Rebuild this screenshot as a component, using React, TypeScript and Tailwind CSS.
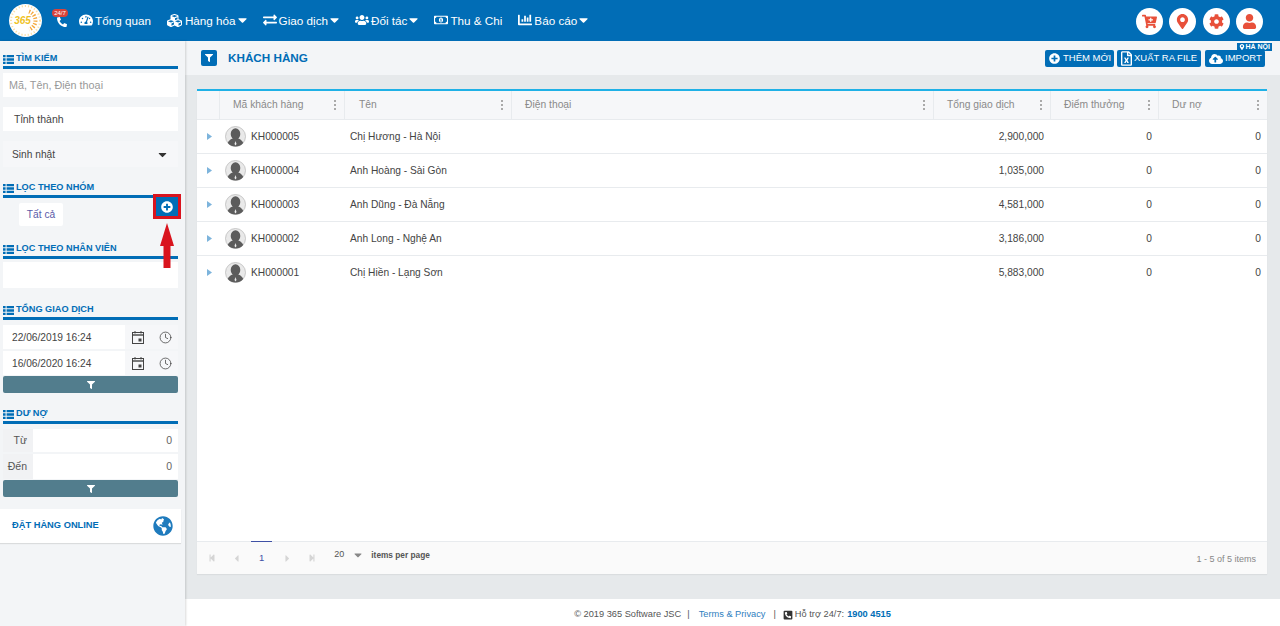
import React from 'react';
import { Clock } from 'lucide-react';
import {
  FaTachometerAlt, FaCubes, FaExchangeAlt, FaUsers, FaRegMoneyBillAlt, FaChartBar, FaCaretDown, FaPhoneAlt,
  FaCartPlus, FaMapMarkerAlt, FaCog, FaUser, FaFilter, FaPlusCircle, FaRegFileExcel, FaCloudUploadAlt,
  FaGlobeAmericas, FaPhoneSquareAlt, FaCaretRight, FaStepBackward, FaStepForward, FaCaretLeft,
} from 'react-icons/fa';

interface Customer {
  code: string;
  name: string;
  total: string;
}

const customers: Customer[] = [
  { code: 'KH000005', name: 'Chị Hương - Hà Nội', total: '2,900,000' },
  { code: 'KH000004', name: 'Anh Hoàng - Sài Gòn', total: '1,035,000' },
  { code: 'KH000003', name: 'Anh Dũng - Đà Nẵng', total: '4,581,000' },
  { code: 'KH000002', name: 'Anh Long - Nghệ An', total: '3,186,000' },
  { code: 'KH000001', name: 'Chị Hiền - Lạng Sơn', total: '5,883,000' },
];

const Logo = () => (
  <div className="w-[33px] h-[33px] rounded-full bg-white flex items-center justify-center relative overflow-hidden">
    <svg viewBox="0 0 33 33" className="absolute inset-0 w-full h-full">
      <circle cx="16.5" cy="16.5" r="14.5" fill="none" stroke="#f9dfa6" strokeWidth="2" strokeDasharray="1.2 2" />
      <path d="M20 7.5 A9.5 9.5 0 0 1 20 25.5" fill="none" stroke="#f4a93f" strokeWidth="4" strokeDasharray="1.3 1.6" />
    </svg>
    <span className="relative text-[10px] font-bold italic text-[#efc21f] mr-[6px]">365</span>
  </div>
);

const NavItem = ({ icon, label, caret, iconClass }: { icon: React.ReactNode; label: string; caret?: boolean; iconClass?: string }) => (
  <div className="flex items-center text-white text-[11.7px] whitespace-nowrap">
    <span className={`mr-[2px] text-[14px] flex justify-center ${iconClass ?? 'w-[14px]'}`}>{icon}</span>
    <span>{label}</span>
    {caret && <FaCaretDown className="ml-[2px] w-[9px] h-[14px]" />}
  </div>
);

const RoundBtn = ({ children }: { children: React.ReactNode }) => (
  <div className="w-[27px] h-[27px] rounded-full bg-white flex items-center justify-center text-[#e8503a] text-[15px]">
    {children}
  </div>
);

const ListIcon = () => (
  <svg viewBox="0 0 11 9" className="w-[11px] h-[9px] shrink-0" fill="#016db6">
    <path d="M0 0H2.6V2.3H0ZM3.6 0H11V2.3H3.6ZM0 3.35H2.6V5.65H0ZM3.6 3.35H11V5.65H3.6ZM0 6.7H2.6V9H0ZM3.6 6.7H11V9H3.6Z" />
  </svg>
);

const SectionTitle = ({ title }: { title: string }) => (
  <div className="ml-[3px] w-[175px] h-[18px] border-b-[3px] border-[#016db6] flex items-center gap-[2px] pt-px text-[#016db6] text-[9.2px] font-bold leading-none">
    <ListIcon />
    <span>{title}</span>
  </div>
);

const FilterBtn = () => (
  <div className="ml-[3px] w-[175px] h-[17px] rounded-[2px] bg-[#527d8d] flex items-center justify-center text-white text-[8px]">
    <FaFilter />
  </div>
);

const CalendarIcon = () => (
  <svg viewBox="0 0 12 13" className="w-[12px] h-[13px] ml-[7px]" fill="none" stroke="#444" strokeWidth="1">
    <rect x="0.5" y="1.5" width="11" height="11" />
    <path d="M0.5 4H11.5" strokeWidth="1.4" />
    <path d="M3 0V2.5M9 0V2.5" />
    <rect x="6.5" y="7.5" width="3" height="3" fill="#444" stroke="none" />
  </svg>
);

const DateRow = ({ value, className }: { value: string; className: string }) => (
  <div className={`ml-[3px] w-[175px] h-[24px] flex items-center bg-white text-[10.2px] text-[#444] ${className}`}>
    <span className="pl-[9px] pt-px flex-1">{value}</span>
    <div className="w-[53px] h-full bg-[#f6f7f9] flex items-center pt-px">
      <CalendarIcon />
      <Clock size={13} strokeWidth={1.3} className="ml-[15px] text-[#333]" />
    </div>
  </div>
);

const DebtRow = ({ label, className }: { label: string; className: string }) => (
  <div className={`ml-[3px] w-[175px] flex text-[10.5px] text-[#555] ${className}`}>
    <div className="w-[30px] bg-[#f1f2f4] flex items-center justify-end pr-[6px]">{label}</div>
    <div className="flex-1 bg-white flex items-center justify-end pr-[6px] text-[#666]">0</div>
  </div>
);

const Sidebar = () => (
  <aside className="w-[185px] shrink-0 bg-[#f3f5f7] shadow-[1px_0_2px_rgba(0,0,0,0.15)] flex flex-col pt-[10px] z-10">
    <SectionTitle title="TÌM KIẾM" />
    <div className="ml-[3px] w-[175px] mt-[4px] h-[24px] bg-white flex items-center pl-[6px] text-[10.8px] text-[#999]">Mã, Tên, Điện thoại</div>
    <div className="ml-[3px] w-[175px] mt-[10px] h-[24px] bg-white flex items-center pl-[11px] pt-px text-[10.5px] text-[#444]">Tỉnh thành</div>
    <div className="ml-[3px] w-[175px] mt-[10px] h-[26px] bg-[#f6f7f9] flex items-center justify-between px-[9px] pt-px text-[10.2px] text-[#444]">
      <span>Sinh nhật</span>
      <FaCaretDown className="text-[#333] text-[13px]" />
    </div>
    <div className="mt-[13px]">
      <SectionTitle title="LỌC THEO NHÓM" />
    </div>
    <div className="relative h-[43px]">
      <div className="absolute left-[19px] top-[5px] w-[44px] h-[23px] bg-white rounded-[2px] flex items-center justify-center text-[10.2px] text-[#5a5aa8]">Tất cả</div>
      <div className="absolute left-[153px] top-[-4px] w-[28px] h-[25px] border-[3px] border-[#d9141e] bg-[#016db6] flex items-center justify-center text-white text-[12px]">
        <FaPlusCircle />
      </div>
      <div className="absolute left-[160px] top-[25px] w-[14px] h-[45px] z-20">
        <svg viewBox="0 0 14 45" className="w-full h-full">
          <path d="M7 0 L14 23 L10.5 23 L10.5 45 L3.5 45 L3.5 23 L0 23 Z" fill="#d9141e" />
        </svg>
      </div>
    </div>
    <SectionTitle title="LỌC THEO NHÂN VIÊN" />
    <div className="ml-[3px] w-[175px] mt-[3px] h-[26px] bg-white" />
    <div className="mt-[14px]">
      <SectionTitle title="TỔNG GIAO DỊCH" />
    </div>
    <DateRow value="22/06/2019 16:24" className="mt-[5px]" />
    <DateRow value="16/06/2020 16:24" className="mt-[2px]" />
    <div className="mt-[1px]"><FilterBtn /></div>
    <div className="mt-[13px]">
      <SectionTitle title="DƯ NỢ" />
    </div>
    <DebtRow label="Từ" className="mt-[4px] h-[24px] pt-px" />
    <DebtRow label="Đến" className="mt-[2px] h-[25px]" />
    <div className="mt-[1px]"><FilterBtn /></div>
    <div className="mt-[12px] w-[181px] h-[34px] bg-white shadow-[0_1px_1px_rgba(0,0,0,0.1)] flex items-center justify-between pl-[12px] pr-[8px]">
      <span className="text-[#016db6] text-[9.3px] font-bold">ĐẶT HÀNG ONLINE</span>
      <FaGlobeAmericas className="text-[#1f7bbd] text-[20px]" />
    </div>
  </aside>
);

const ActionBtn = ({ icon, label, className }: { icon: React.ReactNode; label: string; className: string }) => (
  <div className={`h-[17px] rounded-[2px] bg-[#016db6] text-white text-[9.5px] flex items-center whitespace-nowrap ${className}`}>
    {icon}
    <span>{label}</span>
  </div>
);

const HeadCell = ({ label, className }: { label: string; className: string }) => (
  <div className={`h-full border-r border-[#e8ebee] flex items-center justify-between text-[10.3px] text-[#8a8a8a] ${className}`}>
    <span>{label}</span>
    <span className="flex flex-col gap-[2px] mr-[8px]">
      <i className="w-[2px] h-[2px] bg-[#aaa] block" />
      <i className="w-[2px] h-[2px] bg-[#aaa] block" />
      <i className="w-[2px] h-[2px] bg-[#aaa] block" />
    </span>
  </div>
);

const Avatar = () => (
  <svg viewBox="0 0 21 21" className="w-[21px] h-[21px]">
    <circle cx="10.5" cy="10.5" r="10" fill="#e9e9e9" stroke="#bbb" strokeWidth="0.8" />
    <ellipse cx="10.5" cy="8" rx="4.8" ry="5.8" fill="#5c5c5c" />
    <path d="M2.8 17 C4 13.5 7 13 8.5 12 L12.5 12 C14 13 17 13.5 18.2 17 C16 19.6 13.5 20.5 10.5 20.5 C7.5 20.5 5 19.6 2.8 17Z" fill="#5c5c5c" />
    <path d="M10.5 15 L11.5 18 L10.5 19.5 L9.5 18Z" fill="#eee" />
  </svg>
);

const Row = ({ customer, last }: { customer: Customer; last: boolean }) => (
  <div className={`h-[34px] shrink-0 flex items-center border-b text-[10.2px] text-[#444] ${last ? 'border-transparent' : 'border-[#e8ebee]'}`}>
    <div className="w-[28px] pl-[10px]">
      <svg viewBox="0 0 5 7" className="w-[5px] h-[7px]"><path d="M0 0 L5 3.5 L0 7Z" fill="#7db4dc" /></svg>
    </div>
    <div className="w-[119px] flex items-center gap-[5px]">
      <Avatar />
      <span>{customer.code}</span>
    </div>
    <div className="w-[167px] pl-[6px]">{customer.name}</div>
    <div className="w-[423px]" />
    <div className="w-[116px] text-right pr-[6px]">{customer.total}</div>
    <div className="w-[108px] text-right pr-[6px]">0</div>
    <div className="flex-1 text-right pr-[6px]">0</div>
  </div>
);

const Card = () => (
  <div className="mx-[12px] mt-[14px] h-[485px] w-[1070px] bg-white border-t-2 border-[#1fb1e6] flex flex-col shadow-[0_1px_1px_rgba(0,0,0,0.05)]">
    <div className="h-[29px] shrink-0 bg-[#f6f7f9] border-b border-[#e8ebee] flex">
      <div className="w-[23px] border-r border-[#e8ebee]" />
      <HeadCell label="Mã khách hàng" className="w-[125px] pl-[13px]" />
      <HeadCell label="Tên" className="w-[167px] pl-[14px]" />
      <HeadCell label="Điện thoại" className="w-[422px] pl-[13px]" />
      <HeadCell label="Tổng giao dịch" className="w-[117px] pl-[13px]" />
      <HeadCell label="Điểm thưởng" className="w-[108px] pl-[13px]" />
      <HeadCell label="Dư nợ" className="flex-1 pl-[13px] border-r-0" />
    </div>
    {customers.map((c, i) => <Row key={c.code} customer={c} last={i === customers.length - 1} />)}
    <div className="mt-auto h-[33px] bg-[#fafafa] border-t border-[#e8ebee] flex items-center relative text-[9px] text-[#555]">
      <div className="absolute left-[54px] top-[-1px] w-[21px] h-px bg-[#3f51a5]" />
      <FaStepBackward className="ml-[11px] text-[8px] text-[#d5d5d5]" />
      <FaCaretLeft className="ml-[15px] text-[11px] text-[#d5d5d5]" />
      <span className="ml-[17px] text-[9.5px] text-[#3f51a5]">1</span>
      <FaCaretRight className="ml-[18px] text-[11px] text-[#d5d5d5]" />
      <FaStepForward className="ml-[15px] text-[8px] text-[#d5d5d5]" />
      <span className="ml-[18px] text-[9px] -mt-[6px]">20</span>
      <FaCaretDown className="ml-[8px] text-[12px] text-[#888] -mt-[6px]" />
      <span className="ml-[7px] text-[8.3px] font-bold -mt-[6px]">items per page</span>
      <span className="ml-auto mr-[11px] text-[#888] mt-[3px]">1 - 5 of 5 items</span>
    </div>
  </div>
);

export default function App() {
  return (
    <div className="w-[1280px] h-[626px] overflow-hidden flex flex-col bg-white font-['Liberation_Sans',Arial,sans-serif]">
      <header className="h-[41px] shrink-0 bg-[#016db6] flex items-center pl-[9px] pr-[17px]">
        <Logo />
        <div className="relative w-[20px] ml-[10px] mr-[7px] text-white text-[10px] flex justify-center mt-[2px]">
          <FaPhoneAlt />
          <span className="absolute -top-[8px] left-[0px] w-[16px] h-[8px] rounded-full bg-[#d9433a] text-[6px] leading-[8px] text-center">24/7</span>
        </div>
        <div className="flex items-center gap-[16px]">
          <NavItem icon={<FaTachometerAlt />} label="Tổng quan" />
          <NavItem icon={<FaCubes />} label="Hàng hóa" caret iconClass="w-[16px] text-[15px]" />
          <NavItem icon={<FaExchangeAlt />} label="Giao dịch" caret />
          <NavItem icon={<FaUsers />} label="Đối tác" caret />
          <NavItem icon={<FaRegMoneyBillAlt />} label="Thu & Chi" />
          <NavItem icon={<FaChartBar />} label="Báo cáo" caret />
        </div>
        <div className="ml-auto flex items-center gap-[6.5px] mt-px">
          <RoundBtn><FaCartPlus /></RoundBtn>
          <RoundBtn><FaMapMarkerAlt /></RoundBtn>
          <RoundBtn><FaCog /></RoundBtn>
          <RoundBtn><FaUser /></RoundBtn>
        </div>
      </header>
      <div className="flex flex-1 min-h-0">
        <Sidebar />
        <main className="flex-1 flex flex-col min-w-0">
          <div className="flex-1 bg-[#e6e9eb] flex flex-col min-h-0">
            <div className="h-[34px] shrink-0 bg-[#f3f5f7] flex items-center relative pl-[16px] pr-[15px]">
              <div className="w-[16px] h-[16px] rounded-[2px] bg-[#016db6] flex items-center justify-center text-white text-[8px]">
                <FaFilter />
              </div>
              <span className="ml-[11px] text-[11.7px] font-bold text-[#016db6]">KHÁCH HÀNG</span>
              <div className="ml-auto flex items-center gap-[3px] mt-px">
                <ActionBtn className="w-[69px] pl-[4px] gap-[3px]" icon={<FaPlusCircle className="text-[11px]" />} label="THÊM MỚI" />
                <ActionBtn className="w-[84px] pl-[4px] gap-[2px]" icon={<FaRegFileExcel className="w-[11px] h-[15px]" />} label="XUẤT RA FILE" />
                <ActionBtn className="w-[60px] ml-px pl-[4px] gap-[2px]" icon={<FaCloudUploadAlt className="text-[14px]" />} label="IMPORT" />
              </div>
              <div className="absolute right-[8px] top-[2px] h-[8px] bg-[#016db6] text-white text-[7px] font-bold leading-[8px] px-[2px] flex items-center gap-px">
                <FaMapMarkerAlt className="text-[6px]" />HÀ NỘI
              </div>
            </div>
            <Card />
          </div>
          <footer className="h-[27px] shrink-0 bg-white flex items-center justify-center pt-[4px] text-[9.25px] text-[#555] whitespace-nowrap">
            <span>© 2019 365 Software JSC</span>
            <span className="ml-[6px]">|</span>
            <span className="ml-[9px] text-[#2f80c0]">Terms &amp; Privacy</span>
            <span className="ml-[8px]">|</span>
            <FaPhoneSquareAlt className="ml-[7px] text-[#333] text-[10px]" />
            <span className="ml-[2px]">Hỗ trợ 24/7:</span>
            <span className="ml-[3px] font-bold text-[#016db6]">1900 4515</span>
          </footer>
        </main>
      </div>
    </div>
  );
}
